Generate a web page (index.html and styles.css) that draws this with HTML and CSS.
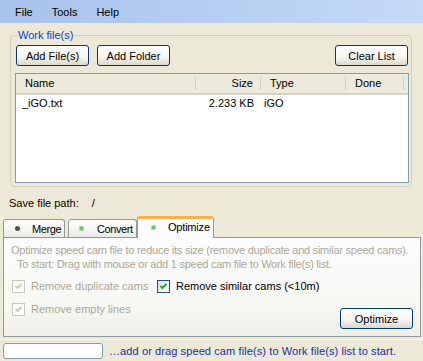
FILE: index.html
```html
<!DOCTYPE html>
<html lang="en">
<head>
    <meta charset="UTF-8">
    <title>Speed Cam Tool</title>
    <link rel="stylesheet" href="styles.css">
</head>
<body>

<div class="menubar">
    <span class="menu-item">File</span>
    <span class="menu-item">Tools</span>
    <span class="menu-item">Help</span>
</div>

<fieldset class="group">
    <legend>Work file(s)</legend>
    <div class="toolbar">
        <button class="btn">Add File(s)</button>
        <button class="btn">Add Folder</button>
        <button class="btn btn-right">Clear List</button>
    </div>
    <div class="listview">
        <div class="lv-header">
            <div class="col">Name</div>
            <div class="col right">Size</div>
            <div class="col">Type</div>
            <div class="col">Done</div>
            <div class="col last"></div>
        </div>
        <div class="lv-row">
            <div class="cell">_iGO.txt</div>
            <div class="cell right">2.233 KB</div>
            <div class="cell">iGO</div>
            <div class="cell"></div>
        </div>
    </div>
</fieldset>

<div class="save-path">
    <span>Save file path:</span>
    <span class="path">/</span>
</div>

<div class="tabs">
    <div class="tab-strip">
        <div class="tab tab-merge"><span class="dot grey"></span>Merge</div>
        <div class="tab tab-convert"><span class="dot green"></span>Convert</div>
        <div class="tab active"><span class="dot green"></span>Optimize</div>
    </div>
    <div class="tab-panel">
        <p class="hint">Optimize speed cam file to reduce its size (remove duplicate and similar speed cams).</p>
        <p class="hint indent">To start: Drag with mouse or add 1 speed cam file to Work file(s) list.</p>
        <div class="options">
            <label class="check disabled">
                <span class="box"><svg width="11" height="11" viewBox="0 0 11 11"><path d="M2.5 5 L4.5 7 L8.5 3" fill="none" stroke="#c9c7b6" stroke-width="1.8"/></svg></span>
                Remove duplicate cams
            </label>
            <label class="check">
                <span class="box"><svg width="11" height="11" viewBox="0 0 11 11"><path d="M2.5 5 L4.5 7 L8.5 3" fill="none" stroke="#21a121" stroke-width="1.8"/></svg></span>
                Remove similar cams (&lt;10m)
            </label>
        </div>
        <div class="options last-row">
            <label class="check disabled">
                <span class="box"><svg width="11" height="11" viewBox="0 0 11 11"><path d="M2.5 5 L4.5 7 L8.5 3" fill="none" stroke="#c9c7b6" stroke-width="1.8"/></svg></span>
                Remove empty lines
            </label>
            <button class="btn btn-optimize">Optimize</button>
        </div>
    </div>
</div>

<div class="statusbar">
    <div class="status-box"></div>
    <span class="status-text">…add or drag speed cam file(s) to Work file(s) list to start.</span>
</div>

</body>
</html>
```

FILE: styles.css
```css
body {
    font-family: "Liberation Sans", Arial, sans-serif;
    font-size: 11px;
    margin: 0;
    width: 423px;
    height: 361px;
    background-color: #ece9d8;
    color: #000;
    display: flex;
    flex-direction: column;
    overflow: hidden;
}
.menubar {
    height: 23px;
    flex: none;
    display: flex;
    align-items: center;
    padding-left: 15px;
    gap: 19px;
    background: linear-gradient(to right, #a7c2ec, #c5daf7);
}
.group {
    box-sizing: border-box;
    width: 402px;
    margin: 6px 0 0 10px;
    padding: 4px 2px 3px 4px;
    border: 1px solid #d0d0bf;
    border-radius: 4px;
    flex: none;
    min-width: 0;
}
.group legend {
    color: #0046d5;
    line-height: 12px;
    padding: 0 1px;
    margin-left: 2px;
}
.toolbar {
    display: flex;
    gap: 8px;
    margin: 0 1px 7px 1px;
}
.btn {
    font-family: inherit;
    font-size: 11px;
    width: 73px;
    height: 21px;
    padding: 0;
    border: 1px solid #003c74;
    border-radius: 3px;
    background: linear-gradient(to bottom, #ffffff 0%, #f5f4ef 60%, #dcd8cc 100%);
    color: #000;
}
.btn-right {
    margin-left: auto;
}
.listview {
    height: 108px;
    background-color: #fff;
    border: 1px solid #7f9db9;
}
.lv-header {
    display: grid;
    grid-template-columns: 180px 65px 85px 58px 1fr;
    height: 19px;
    background-color: #ebeadb;
    border-bottom: 2px solid #d6d3c4;
}
.col {
    padding-left: 9px;
    border-right: 1px solid #d4d0bf;
    margin: 3px 0;
    line-height: 13px;
}
.col.last {
    border-right: none;
}
.col.right {
    text-align: right;
    padding-left: 0;
    padding-right: 7px;
}
.lv-row {
    display: grid;
    grid-template-columns: 180px 65px 85px 58px;
    height: 16px;
    line-height: 16px;
}
.cell {
    padding-left: 6px;
}
.cell.right {
    text-align: right;
    padding-right: 7px;
}
.cell + .cell + .cell {
    padding-left: 3px;
}
.save-path {
    display: flex;
    gap: 13px;
    margin: 9px 0 0 9px;
    line-height: 14px;
    flex: none;
}
.tabs {
    margin: 6px 2px 0 3px;
    flex: none;
}
.tab-strip {
    display: flex;
    align-items: flex-end;
    height: 21px;
}
.tab {
    position: relative;
    box-sizing: border-box;
    height: 18px;
    margin-right: 3px;
    padding-left: 11px;
    border: 1px solid #919b9c;
    border-bottom: none;
    border-radius: 3px 3px 0 0;
    background: linear-gradient(to bottom, #ffffff, #ecebe6);
    display: flex;
    align-items: center;
    letter-spacing: -0.4px;
}
.tab-merge {
    width: 62px;
}
.tab-convert {
    width: 69px;
    padding-left: 10px;
    margin-right: 0;
}
.tab.active {
    width: 77px;
    height: 22px;
    padding-left: 13px;
    background: #fcfcfe;
    border-top: 3px solid #f7b04a;
    margin-bottom: -1px;
    z-index: 1;
    align-items: flex-start;
    line-height: 16px;
    letter-spacing: -0.2px;
}
.dot {
    width: 5px;
    height: 5px;
    margin-right: 12px;
    flex: none;
}
.dot.grey {
    background: #505050;
    border-radius: 50%;
}
.dot.green {
    background: #6cc36c;
    border: 1px solid #b2dfb2;
    width: 3px;
    height: 3px;
    margin-right: 13px;
}
.tab.active .dot {
    margin-top: 6px;
    margin-right: 12px;
}
.tab-panel {
    box-sizing: border-box;
    height: 100px;
    border: 1px solid #919b9c;
    background: linear-gradient(to bottom, #fcfcfe 0%, #f7f7f3 70%, #efeee7 100%);
    padding: 5px 0 0 7px;
}
.hint {
    margin: 0;
    line-height: 14px;
    color: #aca899;
    letter-spacing: -0.25px;
}
.hint.indent {
    padding-left: 6px;
}
.options {
    display: flex;
    align-items: flex-start;
    margin-top: 7px;
    height: 16px;
}
.check {
    display: flex;
    align-items: center;
    height: 16px;
    color: #000;
}
.check.disabled {
    color: #aca899;
    width: 145px;
}
.box {
    width: 11px;
    height: 11px;
    border: 1px solid #1c5180;
    background: linear-gradient(to bottom right, #dcdcd7, #ffffff);
    margin: 0 6px 0 1px;
    display: flex;
    flex: none;
}
.check.disabled .box {
    border-color: #cac8bb;
    background: #fff;
}
.btn-optimize {
    margin-left: auto;
    margin-right: 7px;
    margin-top: 7px;
}
.statusbar {
    margin-top: 2px;
    flex: 1;
    display: flex;
    align-items: center;
    gap: 6px;
    padding-left: 3px;
    border-top: 1px solid #f6f5ee;
}
.status-box {
    width: 98px;
    height: 14px;
    flex: none;
    border: 1px solid #7f9db9;
    border-radius: 3px;
    background: #fff;
}
.status-text {
    color: #1a2cab;
    white-space: nowrap;
    letter-spacing: 0.1px;
}
```
